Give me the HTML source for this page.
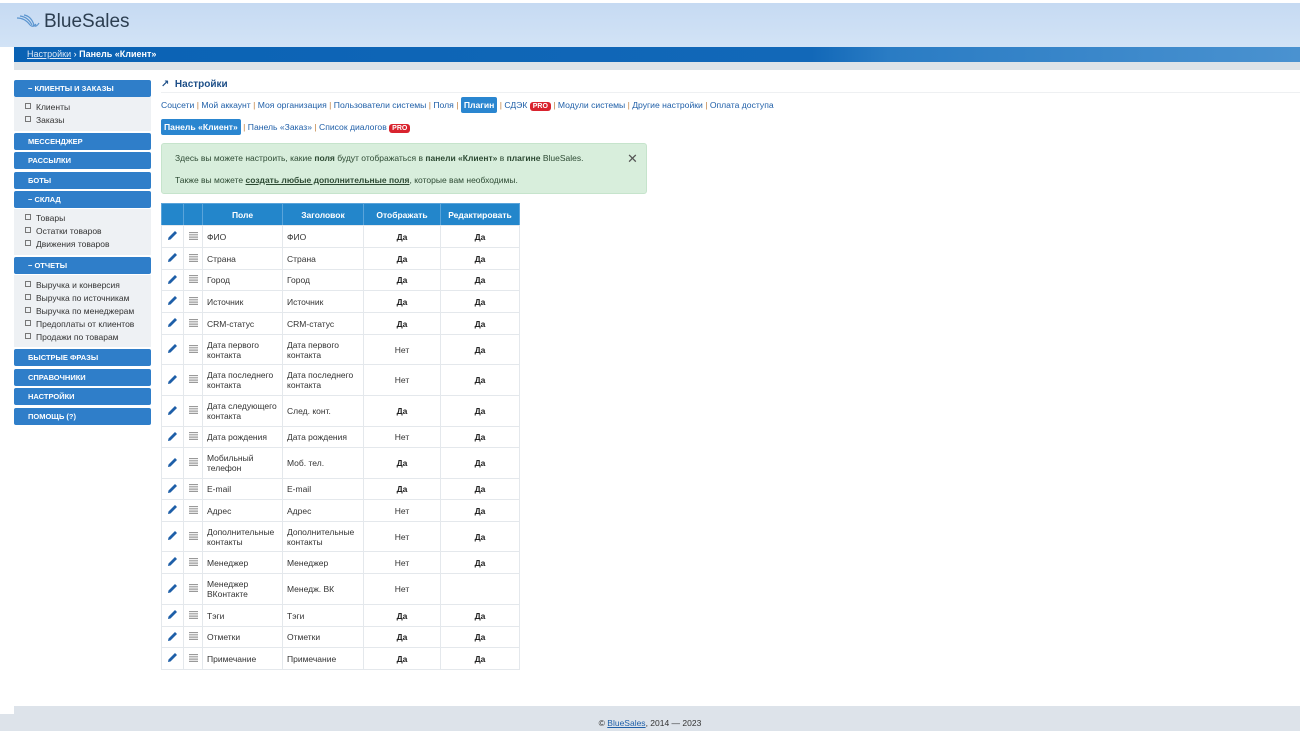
<!DOCTYPE html>
<html><head><meta charset="utf-8"><style>
*{margin:0;padding:0;box-sizing:border-box}
body{width:1300px;height:731px;position:relative;background:#fff;font-family:"Liberation Sans","DejaVu Sans",sans-serif;font-size:9px;color:#333;overflow:hidden}
.a{position:absolute}
a{color:#1f5fa8;text-decoration:none}
.hdr{left:0;top:3px;width:1300px;height:44px;background:linear-gradient(#c6daf2,#d2e3f6)}
.bar{left:14px;top:47px;width:1286px;height:15px;background:linear-gradient(90deg,#0a62b4 0,#1268b8 62%,#2a7cc4 68%,#4a92d0 100%)}
.strip{left:14px;top:62px;width:1286px;height:8px;background:#dde3e8}
.sb{left:14px;width:137px;height:17px;background:#2f7ec9;border-radius:2px;color:#fff;font-weight:bold;font-size:7.5px;line-height:17px;padding-left:14px}
.sub{left:14px;width:137px;background:#eef1f4}
.li{position:absolute;left:11px;font-size:8.5px;color:#333}
.li:before{content:"";display:inline-block;width:4px;height:4px;border:1px solid #777;margin-right:5px;vertical-align:1px}
.btn{background:#2a86d0;color:#fff;font-weight:bold;border-radius:2px;padding:3px 3px}
.pro{display:inline-block;background:#d9232e;color:#fff;font-weight:bold;font-size:7px;line-height:9px;border-radius:3px;padding:0 3px;vertical-align:0}
.sep{color:#c08040}
table{border-collapse:collapse;position:absolute;left:161px;top:203px;table-layout:fixed}
td,th{border:1px solid #e4e8ec;font-size:8.5px;padding:0 4px;line-height:10px}
th{background:#2386cb;color:#fff;height:22px;border-color:#5aa4da;font-size:8.5px}
td.c{text-align:center}
td.b{font-weight:bold;text-align:center;color:#222}
td.n{text-align:center}
</style></head><body>
<div class="a hdr"></div>
<div class="a" style="left:16px;top:14px;">
<svg width="26" height="16" viewBox="0 0 26 16"><g fill="none" stroke="#5b95cf" stroke-width="1.2"><path d="M1 4 Q9 4 14 11"/><path d="M4 2 Q12 3 16 11"/><path d="M8 1 Q15 2 18 11"/><path d="M14 11 Q17 14 20 10"/><path d="M17 11 Q20 14 23 9"/></g></svg></div>
<div class="a" style="left:44px;top:11px;font-size:19px;color:#2c3e50;">BlueSales</div>
<div class="a bar"></div>
<div class="a" style="left:27px;top:49px;color:#fff;font-size:9px"><span style="text-decoration:underline;color:#dde8f6">Настройки</span> › <b>Панель «Клиент»</b></div>
<div class="a strip"></div>

<div class="a sb" style="top:80px">− КЛИЕНТЫ И ЗАКАЗЫ</div>
<div class="a sub" style="top:97px;height:34px"><span class="li" style="top:5px">Клиенты</span><span class="li" style="top:18px">Заказы</span></div>
<div class="a sb" style="top:133px">МЕССЕНДЖЕР</div>
<div class="a sb" style="top:152px">РАССЫЛКИ</div>
<div class="a sb" style="top:172px">БОТЫ</div>
<div class="a sb" style="top:191px">− СКЛАД</div>
<div class="a sub" style="top:209px;height:46px"><span class="li" style="top:4px">Товары</span><span class="li" style="top:17px">Остатки товаров</span><span class="li" style="top:30px">Движения товаров</span></div>
<div class="a sb" style="top:257px">− ОТЧЕТЫ</div>
<div class="a sub" style="top:275px;height:72px"><span class="li" style="top:5px">Выручка и конверсия</span><span class="li" style="top:18px">Выручка по источникам</span><span class="li" style="top:31px">Выручка по менеджерам</span><span class="li" style="top:44px">Предоплаты от клиентов</span><span class="li" style="top:57px">Продажи по товарам</span></div>
<div class="a sb" style="top:349px">БЫСТРЫЕ ФРАЗЫ</div>
<div class="a sb" style="top:369px">СПРАВОЧНИКИ</div>
<div class="a sb" style="top:388px">НАСТРОЙКИ</div>
<div class="a sb" style="top:408px">ПОМОЩЬ (?)</div>

<div class="a" style="left:161px;top:79px;font-size:10px;font-weight:bold;color:#1d4f88">↗&nbsp; Настройки</div>
<div class="a" style="left:161px;top:92px;width:1139px;height:1px;background:#eef0f2"></div>
<div class="a" style="left:161px;top:97px;line-height:16px;font-size:8.6px"><a>Соцсети</a> <span class="sep">|</span> <a>Мой аккаунт</a> <span class="sep">|</span> <a>Моя организация</a> <span class="sep">|</span> <a>Пользователи системы</a> <span class="sep">|</span> <a>Поля</a> <span class="sep">|</span> <span class="btn">Плагин</span> <span class="sep">|</span> <a>СДЭК</a> <span class="pro">PRO</span> <span class="sep">|</span> <a>Модули системы</a> <span class="sep">|</span> <a>Другие настройки</a> <span class="sep">|</span> <a>Оплата доступа</a></div>
<div class="a" style="left:161px;top:119px;line-height:16px;font-size:8.6px"><span class="btn">Панель «Клиент»</span> <span class="sep">|</span> <a>Панель «Заказ»</a> <span class="sep">|</span> <a>Список диалогов</a> <span class="pro">PRO</span></div>
<div class="a" style="left:161px;top:143px;width:486px;height:51px;background:#d8eedc;border:1px solid #c6e4cc;border-radius:3px;color:#2d4a33;font-size:8.5px">
<div class="a" style="left:13px;top:9px">Здесь вы можете настроить, какие <b>поля</b> будут отображаться в <b>панели «Клиент»</b> в <b>плагине</b> BlueSales.</div>
<div class="a" style="left:13px;top:31px">Также вы можете <b style="text-decoration:underline">создать любые дополнительные поля</b>, которые вам необходимы.</div>
<div class="a" style="left:465px;top:7px;font-size:13px;color:#555">✕</div>
</div>

<table>
<colgroup><col style="width:22px"><col style="width:19px"><col style="width:80px"><col style="width:81px"><col style="width:77px"><col style="width:79px"></colgroup>
<tr><th></th><th></th><th>Поле</th><th>Заголовок</th><th>Отображать</th><th>Редактировать</th></tr>
</table>
<div id="rows"></div>
<script>
var R=[["ФИО","ФИО",1,1,22],["Страна","Страна",1,1,22],["Город","Город",1,1,21],["Источник","Источник",1,1,22],["CRM-статус","CRM-статус",1,1,22],["Дата первого<br>контакта","Дата первого<br>контакта",0,1,30],["Дата последнего<br>контакта","Дата последнего<br>контакта",0,1,31],["Дата следующего<br>контакта","След. конт.",1,1,31],["Дата рождения","Дата рождения",0,1,21],["Мобильный<br>телефон","Моб. тел.",1,1,31],["E-mail","E-mail",1,1,21],["Адрес","Адрес",0,1,22],["Дополнительные<br>контакты","Дополнительные<br>контакты",0,1,30],["Менеджер","Менеджер",0,1,22],["Менеджер<br>ВКонтакте","Менедж. ВК",0,2,31],["Тэги","Тэги",1,1,22],["Отметки","Отметки",1,1,21],["Примечание","Примечание",1,1,22]];
var pen='<svg width="11" height="11" viewBox="0 0 11 11"><path d="M1 10 L1.5 7.5 L8 1 L10 3 L3.5 9.5 Z" fill="#1e5fa8"/></svg>';
var bars='<svg width="9" height="8" viewBox="0 0 9 8"><path d="M0 .5H9M0 2.8H9M0 5.1H9M0 7.4H9" stroke="#999" stroke-width="1.2"/></svg>';
var h='';R.forEach(function(r){h+='<tr style="height:'+r[4]+'px"><td class="c">'+pen+'</td><td class="c">'+bars+'</td><td>'+r[0]+'</td><td>'+r[1]+'</td>'+(r[2]?'<td class="b">Да</td>':'<td class="n">Нет</td>')+(r[3]==1?'<td class="b">Да</td>':'<td></td>')+'</tr>';});
document.getElementById('rows').innerHTML='<table style="top:225px"><colgroup><col style="width:22px"><col style="width:19px"><col style="width:80px"><col style="width:81px"><col style="width:77px"><col style="width:79px"></colgroup>'+h+'</table>';
</script>

<div class="a" style="left:0;top:706px;width:1300px;height:25px;background:#dde3ea"></div>
<div class="a" style="left:0;top:706px;width:14px;height:8px;background:#fff"></div>
<div class="a" style="left:0;top:718px;width:1300px;text-align:center;font-size:8.5px;color:#333">© <a style="text-decoration:underline">BlueSales</a>, 2014 — 2023</div>
</body></html>
